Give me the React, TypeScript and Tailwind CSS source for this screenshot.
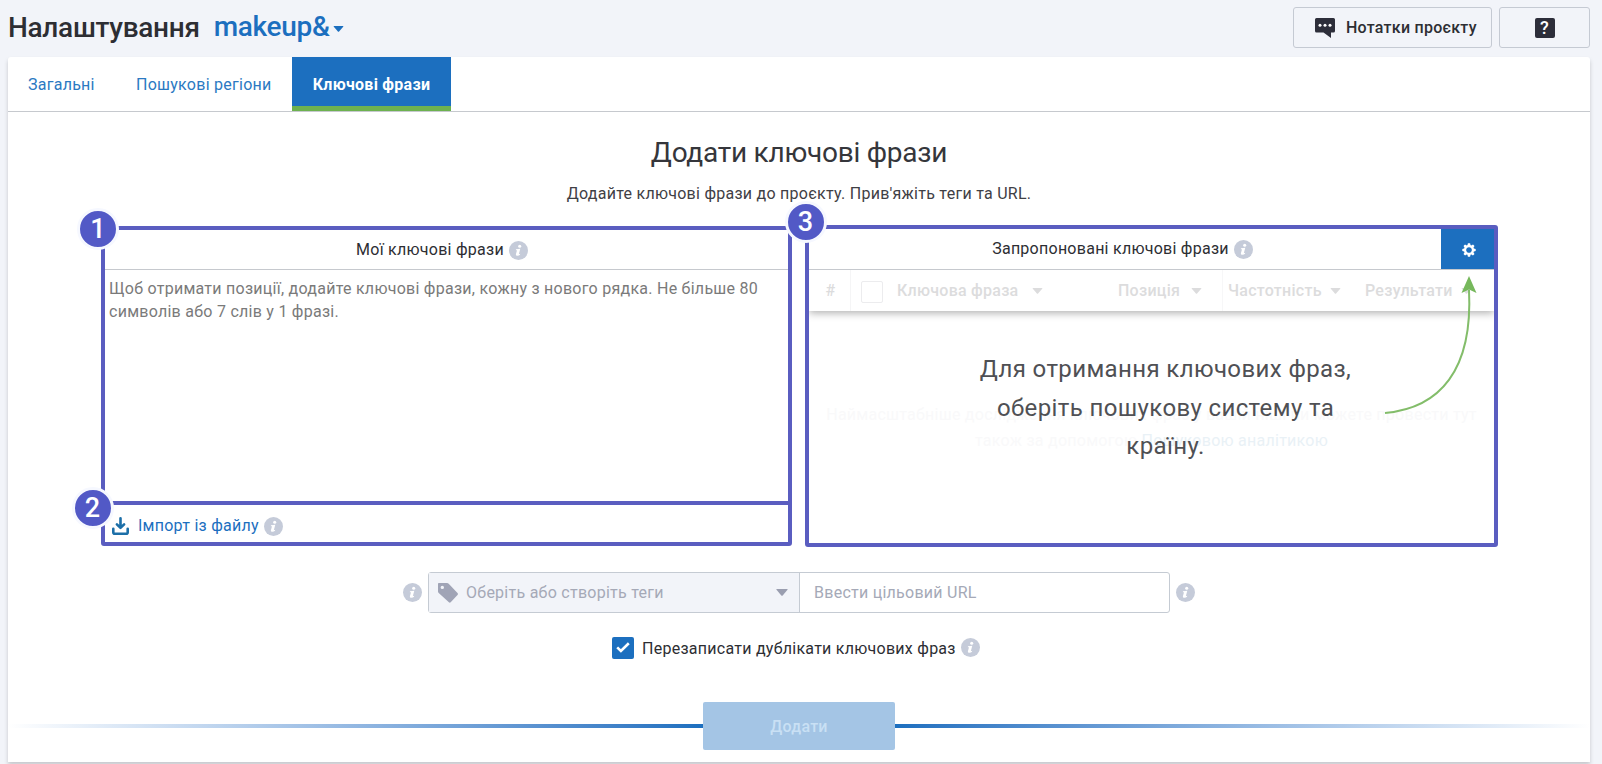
import { useState } from "react";

const columns = [
  { label: "Ключова фраза", className: "w-[235px] pl-[14px] gap-[13px]" },
  { label: "Позиція", className: "w-[104px] gap-[11px]" },
  { label: "Частотність", className: "w-[143px] pl-[5px] gap-[8px] border-l border-[#f7f7f8]" },
  { label: "Результати", className: "gap-[8px]" },
];

function InfoIcon({ className = "" }: { className?: string }) {
  return (
    <svg viewBox="0 0 19 19" className={`w-[19px] h-[19px] shrink-0 ${className}`}>
      <circle cx="9.5" cy="9.5" r="9.5" fill="#c5cbd9" />
      <circle cx="10.7" cy="5.2" r="1.55" fill="#fff" />
      <path
        d="M7 8.3 L11.3 7.7 L9.8 13.2 L11.2 12.8 L11 13.8 C9.6 15.1 6.5 15.2 6.9 13.2 L8 9.3 L6.8 9.3 Z"
        fill="#fff"
      />
    </svg>
  );
}

function Caret({ className = "" }: { className?: string }) {
  return (
    <svg viewBox="0 0 12 7" className={`shrink-0 ${className}`}>
      <path d="M0.8 0 H11.2 Q12 0 11.5 0.8 L6.7 6.4 Q6 7 5.3 6.4 L0.5 0.8 Q0 0 0.8 0 Z" fill="currentColor" />
    </svg>
  );
}

function StepBadge({ value, className }: { value: number; className: string }) {
  return (
    <span
      className={`absolute z-10 flex h-[42px] w-[42px] items-center justify-center rounded-full border-[3px] border-[#f6f8ff] bg-[#5259c6] text-[27px] leading-none font-medium tracking-normal text-white ${className}`}
    >
      {value}
    </span>
  );
}

function Header() {
  return (
    <header className="flex h-[57px] items-start justify-between pt-[7px] pr-[12px] pl-[8px]">
      <div className="flex h-[41px] items-center text-[28px] tracking-[-0.3px] whitespace-nowrap">
        <h1 className="font-medium text-[#2d2e33]">Налаштування</h1>
        <button className="mb-px ml-[14px] flex items-center font-medium text-[#1c6fbf]">
          makeup&amp;
          <Caret className="ml-[3px] mt-[4px] h-[6px] w-[11px]" />
        </button>
      </div>
      <div className="flex gap-[7px]">
        <button className="flex h-[41px] w-[199px] items-center rounded-[3px] border border-[#c5cad3] pl-[21px] text-[16px] font-medium whitespace-nowrap text-[#2d2e33]">
          <svg viewBox="0 0 20 20" className="mr-[11px] h-[20px] w-[20px]">
            <path d="M1.5 0 H18.5 Q20 0 20 1.5 V13 Q20 14.5 18.5 14.5 H16 V20 L8.5 14.5 H1.5 Q0 14.5 0 13 V1.5 Q0 0 1.5 0 Z" fill="#2d2e3a" />
            <circle cx="5" cy="7.3" r="1.5" fill="#fff" />
            <circle cx="10" cy="7.3" r="1.5" fill="#fff" />
            <circle cx="15" cy="7.3" r="1.5" fill="#fff" />
          </svg>
          Нотатки проєкту
        </button>
        <button className="flex h-[41px] w-[91px] items-center justify-center rounded-[3px] border border-[#c5cad3]">
          <span className="flex h-[20px] w-[20px] items-center justify-center rounded-[2px] bg-[#2d2e3a] text-[18px] leading-none font-medium text-white">
            ?
          </span>
        </button>
      </div>
    </header>
  );
}

function Tabs() {
  return (
    <nav className="flex h-[55px] border-b border-[#c6c9ce] text-[16px] whitespace-nowrap">
      <a className="flex w-[108px] items-center pt-[2px] pl-[20px] text-[#2b79c2]">Загальні</a>
      <a className="flex w-[176px] items-center pt-[2px] pl-[20px] text-[#2b79c2]">Пошукові регіони</a>
      <a className="flex w-[159px] items-center justify-center border-b-[5px] border-[#6db14f] bg-[#1c6fbf] pt-[6px] font-bold text-white">
        Ключові фрази
      </a>
    </nav>
  );
}

function MyPhrases() {
  return (
    <section className="relative mt-px h-[320px] w-[691px] rounded-[3px] border-4 border-[#5a5dc0]">
      <StepBadge value={1} className="-top-[22px] -left-[28px]" />
      <StepBadge value={2} className="top-[257px] -left-[33.5px]" />
      <div className="flex h-[40px] items-center justify-center gap-[5px] border-b border-[#c6c9ce] pr-[9px] text-[16px] text-[#2d2e33]">
        Мої ключові фрази
        <InfoIcon className="mt-[2px]" />
      </div>
      <p className="h-[231px] px-[4px] pt-[7px] text-[16px] leading-[23px] whitespace-nowrap text-[#7a7a7a]">
        Щоб отримати позиції, додайте ключові фрази, кожну з нового рядка. Не більше 80
        <br />
        символів або 7 слів у 1 фразі.
      </p>
      <div className="flex h-[41px] items-center border-t-4 border-[#5a5dc0] pt-[4px] pl-[7px] text-[16px] text-[#1c6fbf]">
        <svg viewBox="0 0 17 18" className="h-[18px] w-[17px]" fill="none" stroke="#1c6fa8" strokeWidth="2.6" strokeLinecap="round" strokeLinejoin="round">
          <path d="M8.5 1.3 V10.3 M4.9 7.3 L8.5 10.9 L12.1 7.3" />
          <path d="M1.3 11.8 V15.2 Q1.3 16.7 2.8 16.7 H14.2 Q15.7 16.7 15.7 15.2 V11.8" />
        </svg>
        <span className="ml-[9px]">Імпорт із файлу</span>
        <InfoIcon className="mt-[2px] ml-[5px]" />
      </div>
    </section>
  );
}

function SuggestedPhrases() {
  return (
    <section className="relative ml-[13px] h-[322px] w-[693px] rounded-[3px] border-4 border-[#5a5dc0]">
      <StepBadge value={3} className="-top-[28px] -left-[24.5px]" />
      <div className="flex h-[41px] border-b border-[#c6c9ce]">
        <div className="flex flex-1 items-center justify-center gap-[5px] pr-[5px] text-[16px] text-[#2d2e33]">
          Запропоновані ключові фрази
          <InfoIcon className="mt-px" />
        </div>
        <button className="flex w-[53px] items-center justify-center bg-[#1c6fbf] pt-[2px] pl-[2px]">
          <svg viewBox="-7 -7 14 14" className="h-[14px] w-[14px]">
            <g fill="#fff">
              {[0, 45, 90, 135, 180, 225, 270, 315].map((a) => (
                <path key={a} d="M-1.7 -4 L-1.1 -6.7 H1.1 L1.7 -4 Z" transform={`rotate(${a})`} />
              ))}
            </g>
            <circle r="3.9" fill="none" stroke="#fff" strokeWidth="2.1" />
          </svg>
        </button>
      </div>
      <div className="flex h-[41px] text-[16px] font-medium whitespace-nowrap text-[#dcdcdd] shadow-[0_2px_8px_rgba(0,0,0,0.32)] [clip-path:inset(0_0_-14px_0)]">
        <div className="flex w-[42px] items-center justify-center border-r border-[#f5f5f6] pl-[2px]">#</div>
        <div className="flex w-[32px] items-center pt-[2px] pl-[10px]">
          <span className="h-[22px] w-[22px] rounded-[2px] border border-[#ececee]" />
        </div>
        {columns.map((c) => (
          <div key={c.label} className={`flex items-center ${c.className}`}>
            {c.label}
            <Caret className="mt-px h-[6px] w-[11px]" />
          </div>
        ))}
      </div>
      <div className="relative h-[232px]">
        <p className="absolute inset-x-0 top-[91px] text-center text-[16px] leading-[26px] whitespace-nowrap text-[#f9f9fa]">
          Наймасштабніше дослідження ключових фраз у вашій ніші ви можете провести тут
          <br />
          також за допомогою <span className="text-[#e9f1f6]">Пошуковою аналітикою</span>
        </p>
        <p className="relative mx-auto w-[420px] pt-[39px] pl-[28px] text-center text-[24px] leading-[38.6px] tracking-[0.38px] text-[#4f5054]">
          Для отримання ключових фраз,
          <br />
          оберіть пошукову систему та
          <br />
          країну.
        </p>
      </div>
      <svg viewBox="0 0 100 150" className="absolute top-[42px] left-[571px] h-[150px] w-[100px]">
        <path d="M5 142 C60 137 93 99 89 19" fill="none" stroke="#83bd6a" strokeWidth="2" />
        <path d="M89 5 L96.5 22 L89 18.5 L81.5 22 Z" fill="#76b85c" />
      </svg>
    </section>
  );
}

export default function App() {
  const [overwrite, setOverwrite] = useState(true);

  return (
    <div className="h-[764px] w-[1602px] overflow-hidden bg-[#f2f4f9] font-[Roboto,sans-serif] tracking-[0.26px]">
      <Header />
      <main className="ml-[8px] h-[705px] w-[1582px] rounded-t-[3px] bg-white shadow-[0_3px_4px_rgba(0,0,0,0.18)]">
        <Tabs />
        <h2 className="mt-[22px] text-center text-[28px] leading-[38px] tracking-[-0.25px] text-[#35363b]">
          Додати ключові фрази
        </h2>
        <p className="mt-[10px] text-center text-[16px] leading-[24px] text-[#3f4045]">
          Додайте ключові фрази до проєкту. Прив'яжіть теги та URL.
        </p>

        <div className="mt-[19px] flex pl-[93px]">
          <MyPhrases />
          <SuggestedPhrases />
        </div>

        <div className="mt-[25px] flex items-center pl-[395px] text-[16px] text-[#a5a9b7]">
          <InfoIcon />
          <div className="ml-[6px] flex h-[41px] w-[742px] rounded-[3px] border border-[#c5cbd3]">
            <div className="flex w-[371px] items-center border-r border-[#c5cbd3] bg-[#f2f4f9] pr-[11px] pl-[9px]">
              <svg viewBox="0 0 20 20" className="mr-[8px] h-[20px] w-[20px]">
                <path
                  fillRule="evenodd"
                  d="M0.8 0 H9 Q10 0 10.7 0.7 L19.5 10 Q20.4 11 19.5 12 L12.7 19.3 Q11.8 20.2 10.9 19.3 L0.7 10 Q0 9.4 0 8.5 V0.8 Q0 0 0.8 0 Z M4.3 2.7 A1.7 1.7 0 1 0 4.3 6.1 A1.7 1.7 0 1 0 4.3 2.7 Z"
                  fill="#a0a4b6"
                />
              </svg>
              Оберіть або створіть теги
              <Caret className="ml-auto h-[7px] w-[12px] text-[#9a9eb0]" />
            </div>
            <input
              className="flex-1 px-[14px] tracking-[0.26px] outline-none placeholder:text-[#a5a9b7]"
              placeholder="Ввести цільовий URL"
            />
          </div>
          <InfoIcon className="ml-[6px]" />
        </div>

        <label className="mt-[23px] flex h-[24px] items-center pl-[604px] text-[16px] text-[#2d2e33]">
          <input type="checkbox" className="sr-only" checked={overwrite} onChange={() => setOverwrite(!overwrite)} />
          <span className="flex h-[22px] w-[22px] items-center justify-center rounded-[2px] bg-[#1c6fbf]">
            {overwrite && (
              <svg viewBox="0 0 14 11" className="mb-[2px] h-[11px] w-[14px]" fill="none" stroke="#fff" strokeWidth="2.6">
                <path d="M1.2 5.4 L4.9 8.9 L12.8 1.2" />
              </svg>
            )}
          </span>
          <span className="ml-[8px] pt-px">Перезаписати дублікати ключових фраз</span>
          <InfoIcon className="mb-px ml-[5px]" />
        </label>

        <div className="mt-[42px] flex items-center">
          <div className="h-[4px] flex-1 bg-linear-to-r from-white to-[#1c6fbf]" />
          <button className="h-[48px] w-[192px] rounded-[2px] bg-[#a4c5e5] pt-px text-[16px] font-medium text-[#c9e0f4]">
            Додати
          </button>
          <div className="h-[4px] flex-1 bg-linear-to-l from-white to-[#1c6fbf]" />
        </div>
      </main>
    </div>
  );
}
